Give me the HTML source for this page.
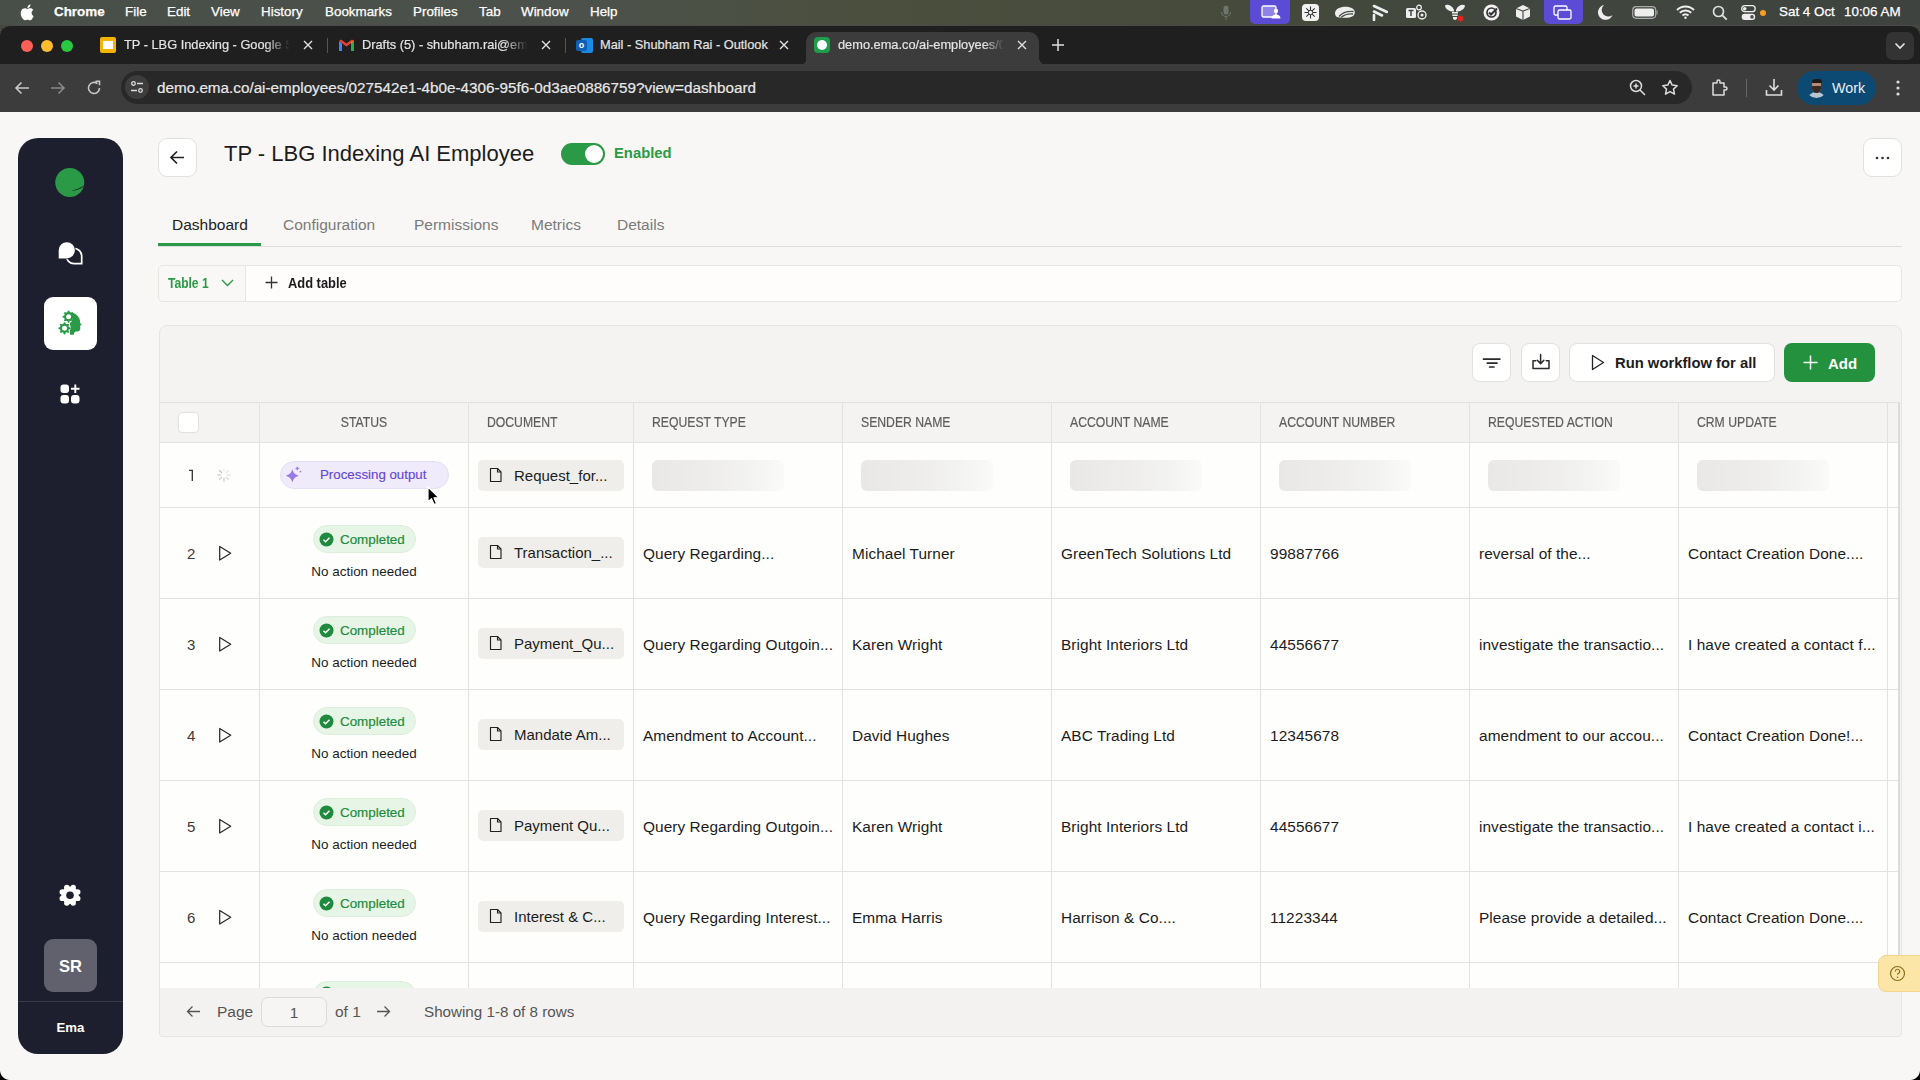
<!DOCTYPE html>
<html><head><meta charset="utf-8">
<style>
*{box-sizing:border-box;margin:0;padding:0}
html,body{width:1920px;height:1080px;overflow:hidden;background:#f8f7f5;font-family:"Liberation Sans",sans-serif;-webkit-font-smoothing:antialiased;}
.abs{position:absolute}
#menubar{position:absolute;left:0;top:0;width:1920px;height:25px;background:linear-gradient(90deg,#484e48 0%,#4c524b 30%,#4a4f3e 45%,#464b3b 62%,#41463e 78%,#3e433f 100%);color:#fff;font-size:13.4px;}
#menubar span{position:absolute;top:4px;white-space:nowrap;-webkit-text-stroke:0.25px #fff}
#tabbar{position:absolute;left:0;top:25px;width:1920px;height:40px;background:#1f1f1f;border-top:1px solid #4a4a4a;border-radius:10px 10px 0 0}
#toolbar{position:absolute;left:0;top:64px;width:1920px;height:48px;background:#3c3c3c}
.tab{position:absolute;top:0;height:40px;color:#e3e3e3;font-size:12.8px}
.tab .t{position:absolute;top:11px;white-space:nowrap;overflow:hidden;-webkit-text-stroke:0.2px #e3e3e3}
.tab .x{position:absolute;top:9px;font-size:16px;color:#e0e0e0}
#page{position:absolute;left:0;top:112px;width:1920px;height:968px;background:#f8f7f5}
#sidebar{position:absolute;left:18px;top:26px;width:105px;height:916px;background:#1e1f2e;border-radius:20px}
</style></head>
<body>
<div id="menubar">
  <svg class="abs" style="left:20px;top:4px" width="14" height="17" viewBox="0 0 14 17"><path fill="#fff" d="M11.6 9c0-2 1.6-3 1.7-3.1-1-1.4-2.4-1.6-2.9-1.6-1.2-.1-2.4.7-3 .7-.6 0-1.6-.7-2.6-.7C3.400 4.300 2.100 5.100 1.400 6.300c-1.400 2.400-.4 6 1 8 .7 1 1.500 2.100 2.500 2 1-.04 1.400-.6 2.600-.6s1.500.6 2.600.6c1.100 0 1.800-1 2.400-2 .8-1.100 1.100-2.200 1.100-2.300 0 0-2.100-.8-2.100-3.300zM9.700 3c.5-.7.9-1.600.8-2.500-.8 0-1.700.5-2.300 1.200-.5.600-.9 1.500-.8 2.400.9.100 1.700-.4 2.300-1.100z"/></svg>
  <span style="left:54px;font-weight:bold">Chrome</span>
  <span style="left:125px">File</span>
  <span style="left:167px">Edit</span>
  <span style="left:211px">View</span>
  <span style="left:261px">History</span>
  <span style="left:325px">Bookmarks</span>
  <span style="left:413px">Profiles</span>
  <span style="left:479px">Tab</span>
  <span style="left:521px">Window</span>
  <span style="left:590px">Help</span>
  <svg class="abs" style="left:1220px;top:5px" width="12" height="16" viewBox="0 0 12 16"><rect x="3.500" y="0.500" width="5" height="9" rx="2.500" fill="#6f746d"/><path d="M1.500 7a4.500 4.500 0 0 0 9 0M6 11.500v3" stroke="#6f746d" stroke-width="1.200" fill="none"/></svg>
  <div class="abs" style="left:1250px;top:0;width:40px;height:24px;background:#5b4bd5;border-radius:0 0 5px 5px"></div>
  <svg class="abs" style="left:1261px;top:5px" width="20" height="14" viewBox="0 0 20 14"><rect x="1" y="1" width="14" height="11" rx="1.500" fill="#8f84e6" stroke="#fff" stroke-width="1.300"/><circle cx="15" cy="6" r="2.200" fill="#fff"/><path d="M10.500 13.500c0-2.500 2-4 4.500-4s4.500 1.500 4.500 4z" fill="#fff"/></svg>
  <div class="abs" style="left:1302px;top:4px;width:17px;height:17px;background:#f2f2f2;border-radius:4px"></div>
  <svg class="abs" style="left:1303px;top:5px" width="15" height="15" viewBox="0 0 15 15"><g stroke="#333" stroke-width="1.100"><path d="M7.500 1.500v12M1.500 7.500h12M3.300 3.300l8.400 8.400M11.700 3.300l-8.400 8.400"/></g><circle cx="7.500" cy="7.500" r="2.200" fill="#f2f2f2" stroke="#333" stroke-width="1"/></svg>
  <svg class="abs" style="left:1334px;top:5px" width="22" height="15" viewBox="0 0 22 15"><path d="M3 12C0 10 .5 5.500 4 3.500 8 1 15 1 18.500 3.500c3 2 3 5.500.5 7.500-2.500 2-10 2.500-16 1z" fill="#eee"/><path d="M5 11.500C8 8 13 6 19.500 6.500M7 12.500c3-2.500 7-4 12-3.500" stroke="#4a4f48" stroke-width="1.300" fill="none"/></svg>
  <svg class="abs" style="left:1370px;top:4px" width="18" height="17" viewBox="0 0 18 17"><path d="M4 2l13 6M4 7.500l8 4M4 11l0 5" stroke="#eee" stroke-width="2.600" stroke-linecap="round"/></svg>
  <svg class="abs" style="left:1405px;top:4px" width="22" height="17" viewBox="0 0 22 17"><rect x="1" y="4" width="10" height="10" rx="1.500" fill="#eee"/><path d="M3.500 6.500h5M6 6.500v5.500" stroke="#444" stroke-width="1.500"/><circle cx="14" cy="3.500" r="2.300" stroke="#eee" stroke-width="1.300" fill="none"/><circle cx="17" cy="11" r="4" stroke="#eee" stroke-width="1.400" fill="none"/><circle cx="17" cy="11" r="1.500" fill="#eee"/></svg>
  <svg class="abs" style="left:1444px;top:3px" width="22" height="19" viewBox="0 0 22 19"><path d="M10 7C8 2 3 1 1 2.500c.5 4 4.500 6 9 6zM12 7c2-5 7-6 9-4.500-.5 4-4.500 6-9 6z" fill="#eee"/><path d="M8 9h6v1.500H8zM8.300 11.500h5.400V13H8.300zM8.800 14h4.400c0 2-1 3-2.200 3S8.800 16 8.800 14z" fill="#eee"/><circle cx="16.500" cy="15.500" r="3" fill="#e0241b"/></svg>
  <svg class="abs" style="left:1483px;top:4px" width="17" height="17" viewBox="0 0 17 17"><circle cx="8.500" cy="8.500" r="8" fill="#f2f2f2"/><circle cx="8.500" cy="8.500" r="4.500" stroke="#333" stroke-width="1.700" fill="none"/><path d="M6 8.500l2 2 6-6" stroke="#333" stroke-width="2" fill="none"/></svg>
  <svg class="abs" style="left:1515px;top:4px" width="16" height="17" viewBox="0 0 16 17"><path d="M8 1l7 3.500v8L8 16 1 12.500v-8z" fill="#eee"/><path d="M1 4.500L8 7l7-2.500M8 7v9" stroke="#4a4f48" stroke-width="1.200" fill="none"/></svg>
  <div class="abs" style="left:1544px;top:0;width:39px;height:24px;background:#5b4bd5;border-radius:0 0 5px 5px"></div>
  <svg class="abs" style="left:1553px;top:5px" width="20" height="15" viewBox="0 0 20 15"><rect x="1" y="1" width="13" height="9" rx="1.500" fill="none" stroke="#fff" stroke-width="1.300"/><rect x="5" y="5" width="13" height="9" rx="1.500" fill="#5b4bd5" stroke="#fff" stroke-width="1.300"/></svg>
  <svg class="abs" style="left:1598px;top:4px" width="15" height="16" viewBox="0 0 15 16"><path d="M6 1A7.500 7.500 0 1 0 14.500 11 6 6 0 0 1 6 1z" fill="#eee"/></svg>
  <svg class="abs" style="left:1632px;top:6px" width="27" height="13" viewBox="0 0 27 13"><rect x="0.700" y="0.700" width="23" height="11.600" rx="3.500" fill="none" stroke="#aaa" stroke-width="1.200"/><rect x="2.500" y="2.500" width="19.500" height="8" rx="2" fill="#eee"/><path d="M25 4.500v4" stroke="#999" stroke-width="1.300"/></svg>
  <svg class="abs" style="left:1676px;top:5px" width="19" height="14" viewBox="0 0 19 14"><path d="M1 5a12 12 0 0 1 17 0M3.800 7.800a8 8 0 0 1 11.400 0M6.500 10.500a4.200 4.200 0 0 1 6 0" stroke="#eee" stroke-width="2" fill="none"/><circle cx="9.500" cy="12.800" r="1.200" fill="#eee"/></svg>
  <svg class="abs" style="left:1712px;top:5px" width="16" height="16" viewBox="0 0 16 16"><circle cx="6.500" cy="6.500" r="5" stroke="#ddd" stroke-width="1.700" fill="none"/><path d="M10.200 10.200l4.500 4.500" stroke="#ddd" stroke-width="1.900"/></svg>
  <svg class="abs" style="left:1741px;top:5px" width="15" height="16" viewBox="0 0 15 16"><rect x="0.700" y="0.700" width="13.500" height="6" rx="3" fill="none" stroke="#eee" stroke-width="1.300"/><circle cx="3.700" cy="3.700" r="1.800" fill="#eee"/><rect x="0.700" y="8.800" width="13.500" height="6.200" rx="3" fill="#eee"/><circle cx="11" cy="11.900" r="1.800" fill="#4a4f48"/></svg>
  <div class="abs" style="left:1760px;top:10px;width:6px;height:6px;border-radius:3px;background:#f5a020"></div>
  <span style="left:1779px">Sat 4 Oct</span>
  <span style="left:1844px">10:06 AM</span>
</div>
<div class="abs" style="left:0;top:25px;width:1920px;height:12px;background:#44493f"></div>
<div id="tabbar">
  <div class="abs" style="left:21px;top:14px;width:12px;height:12px;border-radius:6px;background:#fe5f57"></div>
  <div class="abs" style="left:41px;top:14px;width:12px;height:12px;border-radius:6px;background:#febc2e"></div>
  <div class="abs" style="left:61px;top:14px;width:12px;height:12px;border-radius:6px;background:#28c840"></div>
  <!-- tab1 -->
  <div class="abs" style="left:100px;top:11px;width:16px;height:16px;border-radius:2px;background:#f4b400"><div class="abs" style="left:3px;top:4px;width:10px;height:8px;background:#fff"></div></div>
  <div class="tab" style="left:124px;width:180px"><span class="t" style="width:166px;-webkit-mask-image:linear-gradient(90deg,#000 85%,transparent)">TP - LBG Indexing - Google Sheets</span></div>
  <svg class="abs" style="left:303px;top:14px" width="10" height="10" viewBox="0 0 10 10"><path d="M1 1L9 9M9 1L1 9" stroke="#e0e0e0" stroke-width="1.4"/></svg>
  <div class="abs" style="left:327px;top:12px;width:1px;height:15px;background:#555"></div>
  <!-- tab2 -->
  <svg class="abs" style="left:339px;top:13px" width="15" height="12" viewBox="0 0 15 12"><path d="M0 2v10h3V4.5z" fill="#4285f4"/><path d="M12 4.5V12h3V2z" fill="#34a853"/><path d="M0 2l7.5 5.5L15 2 13 0.5 7.5 4.5 2 0.5z" fill="#ea4335"/><path d="M12 4.5l3-2.5V1.5 L12 3.5z" fill="#fbbc04"/></svg>
  <div class="tab" style="left:362px;width:180px"><span class="t" style="width:166px;-webkit-mask-image:linear-gradient(90deg,#000 85%,transparent)">Drafts (5) - shubham.rai@ema.co</span></div>
  <svg class="abs" style="left:541px;top:14px" width="10" height="10" viewBox="0 0 10 10"><path d="M1 1L9 9M9 1L1 9" stroke="#e0e0e0" stroke-width="1.4"/></svg>
  <div class="abs" style="left:565px;top:12px;width:1px;height:15px;background:#555"></div>
  <!-- tab3 -->
  <div class="abs" style="left:581px;top:12px;width:12px;height:15px;border-radius:2px;background:#1a8ae5"></div>
  <div class="abs" style="left:576px;top:14px;width:11px;height:11px;border-radius:2px;background:#0f5fb5;color:#fff;font-size:9px;font-weight:bold;text-align:center;line-height:11px">o</div>
  <div class="tab" style="left:600px;width:180px"><span class="t" style="width:170px">Mail - Shubham Rai - Outlook</span></div>
  <svg class="abs" style="left:779px;top:14px" width="10" height="10" viewBox="0 0 10 10"><path d="M1 1L9 9M9 1L1 9" stroke="#e0e0e0" stroke-width="1.4"/></svg>
  <!-- active tab -->
  <div class="abs" style="left:806px;top:6px;width:233px;height:34px;background:#3c3c3c;border-radius:10px 10px 0 0"></div>
  <div class="abs" style="left:797px;top:30px;width:10px;height:10px;background:radial-gradient(circle at 0 0,transparent 10px,#3c3c3c 10.5px)"></div>
  <div class="abs" style="left:1039px;top:30px;width:10px;height:10px;background:radial-gradient(circle at 100% 0,transparent 10px,#3c3c3c 10.5px)"></div>
  <div class="abs" style="left:814px;top:11px;width:16px;height:16px;border-radius:4px;background:#1e9e4a"><div class="abs" style="left:3px;top:3px;width:10px;height:10px;border-radius:5px;background:#fff"></div></div>
  <div class="tab" style="left:838px;width:180px"><span class="t" style="width:166px;-webkit-mask-image:linear-gradient(90deg,#000 88%,transparent)">demo.ema.co/ai-employees/027542e1</span></div>
  <svg class="abs" style="left:1017px;top:14px" width="10" height="10" viewBox="0 0 10 10"><path d="M1 1L9 9M9 1L1 9" stroke="#e0e0e0" stroke-width="1.4"/></svg>
  <svg class="abs" style="left:1052px;top:13px" width="12" height="12" viewBox="0 0 12 12"><path d="M6 0v12M0 6h12" stroke="#e0e0e0" stroke-width="1.5"/></svg>
  <div class="abs" style="left:1886px;top:6px;width:28px;height:28px;border-radius:7px;background:#333"></div>
  <svg class="abs" style="left:1894px;top:16px" width="12" height="8" viewBox="0 0 12 8"><path d="M1.5 1.5L6 6l4.5-4.5" stroke="#e8e8e8" stroke-width="1.6" fill="none"/></svg>
</div>
<div id="toolbar">
  <svg class="abs" style="left:14px;top:17px" width="16" height="14" viewBox="0 0 16 14"><path d="M15 7H2M7.5 1.5L2 7l5.5 5.5" stroke="#c8c8c8" stroke-width="1.6" fill="none"/></svg>
  <svg class="abs" style="left:50px;top:17px" width="16" height="14" viewBox="0 0 16 14"><path d="M1 7h13M8.5 1.5L14 7l-5.5 5.5" stroke="#8a8a8a" stroke-width="1.6" fill="none"/></svg>
  <svg class="abs" style="left:86px;top:16px" width="16" height="16" viewBox="0 0 16 16"><path d="M13.5 8A5.5 5.5 0 1 1 11.5 3.7" stroke="#c8c8c8" stroke-width="1.6" fill="none"/><path d="M9.5 1.2h4v4" stroke="#c8c8c8" stroke-width="1.6" fill="none"/></svg>
  <div class="abs" style="left:121px;top:7px;width:1571px;height:33px;border-radius:17px;background:#282828"></div>
  <div class="abs" style="left:125px;top:11px;width:24px;height:24px;border-radius:12px;background:#3d3d3d"></div>
  <svg class="abs" style="left:130px;top:16px" width="14" height="14" viewBox="0 0 14 14"><circle cx="3.5" cy="3.5" r="1.8" stroke="#ddd" stroke-width="1.3" fill="none"/><path d="M7 3.5h6M1 10.5h6" stroke="#ddd" stroke-width="1.3"/><circle cx="10.5" cy="10.5" r="1.8" stroke="#ddd" stroke-width="1.3" fill="none"/></svg>
  <span class="abs" style="left:157px;top:15px;color:#e8e8e8;font-size:15.25px;white-space:nowrap;-webkit-text-stroke:0.2px #e8e8e8">demo.ema.co/ai-employees/027542e1-4b0e-4306-95f6-0d3ae0886759?view=dashboard</span>
  <svg class="abs" style="left:1629px;top:15px" width="18" height="18" viewBox="0 0 18 18"><circle cx="7" cy="7" r="5.5" stroke="#ddd" stroke-width="1.5" fill="none"/><path d="M11 11l5 5M4.5 7h5M7 4.5v5" stroke="#ddd" stroke-width="1.5"/></svg>
  <svg class="abs" style="left:1661px;top:15px" width="18" height="18" viewBox="0 0 18 18"><path d="M9 1.5l2.2 4.6 5 .6-3.7 3.4 1 5-4.5-2.5-4.5 2.5 1-5L1.800 6.700l5-.6z" stroke="#ddd" stroke-width="1.5" fill="none" stroke-linejoin="round"/></svg>
  <svg class="abs" style="left:1711px;top:15px" width="18" height="18" viewBox="0 0 18 18"><path d="M2 4h4V2.500a1.500 1.500 0 0 1 3 0V4h4v4h1.500a1.500 1.500 0 0 1 0 3H13v5H2z" stroke="#ddd" stroke-width="1.5" fill="none" stroke-linejoin="round"/></svg>
  <div class="abs" style="left:1746px;top:15px;width:1px;height:18px;background:#666"></div>
  <svg class="abs" style="left:1765px;top:14px" width="18" height="19" viewBox="0 0 18 19"><path d="M9 1v11M4.5 7.5L9 12l4.5-4.5M1.5 12v5h15v-5" stroke="#ddd" stroke-width="1.6" fill="none"/></svg>
  <div class="abs" style="left:1797px;top:7px;width:79px;height:34px;border-radius:17px;background:#0c4a73"></div>
  <div class="abs" style="left:1806px;top:13px;width:21px;height:21px;border-radius:11px;background:#0c4a73;overflow:hidden"><div class="abs" style="left:2px;top:15px;width:17px;height:10px;border-radius:8px 8px 0 0;background:#b8c4d0"></div><div class="abs" style="left:6px;top:3px;width:9px;height:13px;border-radius:4.500px 4.500px 5px 5px;background:#b58a72"></div><div class="abs" style="left:6px;top:9px;width:9px;height:7px;border-radius:0 0 5px 5px;background:#3a2a24"></div><div class="abs" style="left:5.500px;top:1.500px;width:10px;height:4px;border-radius:5px 5px 1px 1px;background:#1e1a18"></div></div>
  <span class="abs" style="left:1832px;top:16px;color:#e8f0fe;font-size:14.3px;white-space:nowrap">Work</span>
  <svg class="abs" style="left:1895px;top:15px" width="6" height="18" viewBox="0 0 6 18"><circle cx="3" cy="3" r="1.6" fill="#ddd"/><circle cx="3" cy="9" r="1.6" fill="#ddd"/><circle cx="3" cy="15" r="1.6" fill="#ddd"/></svg>
</div>
<div id="page"></div>
<!-- SIDEBAR -->
<div class="abs" style="left:18px;top:138px;width:105px;height:916px;background:#1e1f2e;border-radius:20px"></div>
<svg class="abs" style="left:54px;top:167px" width="32" height="31" viewBox="0 0 32 31"><circle cx="15.75" cy="15.5" r="14.5" fill="#2a9a46"/><path d="M17 23.5c5-0.5 9-2.500 14-5.500-3 3.500-7 5.500-14 5.500z" fill="#1e1f2e"/></svg>
<svg class="abs" style="left:54px;top:236px" width="34" height="34" viewBox="0 0 34 34"><path d="M20 12.300A7.700 7.700 0 0 1 27.700 20V27.700H20A7.700 7.700 0 0 1 12.300 20" stroke="#fff" stroke-width="1.700" fill="none"/><path d="M4.700 14.300A8.100 8.100 0 1 1 12.800 22.400H4.700Z" fill="#fff" stroke="#1e1f2e" stroke-width="1.600" paint-order="stroke"/></svg>
<div class="abs" style="left:44px;top:297px;width:53px;height:53px;background:#fff;border-radius:9px"></div>
<svg class="abs" style="left:55px;top:308px" width="32" height="32" viewBox="0 0 32 32"><path d="M14.800 4.600C19.500 4.600 24.300 8 25 12.800L25.200 15.200L26.700 16.600L25.300 17.600L25.200 21.200C25 23 23.300 23.700 21.300 23.600L19.600 24.100L18.600 26.800L15 26.800L15 22.300C16 20.500 15.800 18.300 15 16.800L15 14.800C17.300 13.800 18.200 11.200 17.400 9C16.900 7.200 15.800 5.800 14.800 4.600Z" fill="#2a9a46"/><circle cx="13.6" cy="8.7" r="3.55" stroke="#2a9a46" stroke-width="2.10" fill="none"/><path d="M17.70 8.70L18.70 8.70" stroke="#2a9a46" stroke-width="2" stroke-linecap="round"/><path d="M16.50 11.60L17.21 12.31" stroke="#2a9a46" stroke-width="2" stroke-linecap="round"/><path d="M13.60 12.80L13.60 13.80" stroke="#2a9a46" stroke-width="2" stroke-linecap="round"/><path d="M10.70 11.60L9.99 12.31" stroke="#2a9a46" stroke-width="2" stroke-linecap="round"/><path d="M9.50 8.70L8.50 8.70" stroke="#2a9a46" stroke-width="2" stroke-linecap="round"/><path d="M10.70 5.80L9.99 5.09" stroke="#2a9a46" stroke-width="2" stroke-linecap="round"/><path d="M13.60 4.60L13.60 3.60" stroke="#2a9a46" stroke-width="2" stroke-linecap="round"/><path d="M16.50 5.80L17.21 5.09" stroke="#2a9a46" stroke-width="2" stroke-linecap="round"/><circle cx="9.5" cy="20.3" r="3.55" stroke="#2a9a46" stroke-width="2.10" fill="none"/><path d="M13.60 20.30L14.60 20.30" stroke="#2a9a46" stroke-width="2" stroke-linecap="round"/><path d="M12.40 23.20L13.11 23.91" stroke="#2a9a46" stroke-width="2" stroke-linecap="round"/><path d="M9.50 24.40L9.50 25.40" stroke="#2a9a46" stroke-width="2" stroke-linecap="round"/><path d="M6.60 23.20L5.89 23.91" stroke="#2a9a46" stroke-width="2" stroke-linecap="round"/><path d="M5.40 20.30L4.40 20.30" stroke="#2a9a46" stroke-width="2" stroke-linecap="round"/><path d="M6.60 17.40L5.89 16.69" stroke="#2a9a46" stroke-width="2" stroke-linecap="round"/><path d="M9.50 16.20L9.50 15.20" stroke="#2a9a46" stroke-width="2" stroke-linecap="round"/><path d="M12.40 17.40L13.11 16.69" stroke="#2a9a46" stroke-width="2" stroke-linecap="round"/></svg>
<svg class="abs" style="left:60px;top:384px" width="21" height="20" viewBox="0 0 21 20"><rect x="0.500" y="0.500" width="8.500" height="8.500" rx="3" fill="#fff"/><rect x="0.500" y="11" width="8.500" height="8.500" rx="3" fill="#fff"/><rect x="11" y="11" width="8.500" height="8.500" rx="3" fill="#fff"/><path d="M15.300 0.500v8.500M11 4.700h8.500" stroke="#fff" stroke-width="1.900"/></svg>
<svg class="abs" style="left:58px;top:883px" width="24" height="24" viewBox="0 0 24 24"><circle cx="12" cy="12.200" r="8.700" fill="#fff"/><circle cx="19.76" cy="15.41" r="2.700" fill="#fff"/><circle cx="15.21" cy="19.96" r="2.700" fill="#fff"/><circle cx="8.79" cy="19.96" r="2.700" fill="#fff"/><circle cx="4.24" cy="15.41" r="2.700" fill="#fff"/><circle cx="4.24" cy="8.99" r="2.700" fill="#fff"/><circle cx="8.79" cy="4.44" r="2.700" fill="#fff"/><circle cx="15.21" cy="4.44" r="2.700" fill="#fff"/><circle cx="19.76" cy="8.99" r="2.700" fill="#fff"/><circle cx="12" cy="12.200" r="3.800" fill="#1e1f2e"/></svg>
<div class="abs" style="left:44px;top:939px;width:53px;height:53px;background:#60616d;border-radius:9px;color:#fff;font-weight:bold;font-size:16.5px;text-align:center;line-height:54px">SR</div>
<div class="abs" style="left:18px;top:1001px;width:105px;height:1px;background:#3a3b48"></div>
<div class="abs" style="left:18px;top:1020px;width:105px;text-align:center;color:#fff;font-weight:bold;font-size:13.2px">Ema</div>

<!-- HEADER -->
<div class="abs" style="left:158px;top:138px;width:39px;height:39px;background:#fff;border:1px solid #e2e1df;border-radius:9px"></div>
<svg class="abs" style="left:169px;top:149px" width="17" height="17" viewBox="0 0 17 17"><path d="M15 8.500H2M8 2.500L2 8.500l6 6" stroke="#222" stroke-width="1.700" fill="none"/></svg>
<div class="abs" style="left:224px;top:141px;font-size:22px;color:#1c1c1c;white-space:nowrap">TP - LBG Indexing AI Employee</div>
<div class="abs" style="left:561px;top:143px;width:44px;height:22px;background:#2a9a46;border-radius:11px"><div class="abs" style="left:24px;top:2px;width:18px;height:18px;border-radius:9px;background:#fff"></div></div>
<div class="abs" style="left:614px;top:145px;font-size:14.8px;color:#2a9a46;font-weight:bold;white-space:nowrap">Enabled</div>
<div class="abs" style="left:1863px;top:138px;width:39px;height:39px;background:#fff;border:1px solid #e2e1df;border-radius:9px"></div>
<svg class="abs" style="left:1875px;top:156px" width="15" height="4" viewBox="0 0 15 4"><circle cx="2" cy="2" r="1.300" fill="#333"/><circle cx="7.500" cy="2" r="1.300" fill="#333"/><circle cx="13" cy="2" r="1.300" fill="#333"/></svg>

<!-- TABS -->
<div class="abs" style="left:158px;top:246px;width:1744px;height:1px;background:#dddcda"></div>
<div class="abs" style="left:158px;top:243px;width:103px;height:3px;background:#2a9a46"></div>
<div class="abs" style="left:172px;top:216px;font-size:15.5px;color:#222;white-space:nowrap">Dashboard</div>
<div class="abs" style="left:283px;top:216px;font-size:15.5px;color:#7b7b7b;white-space:nowrap">Configuration</div>
<div class="abs" style="left:414px;top:216px;font-size:15.5px;color:#7b7b7b;white-space:nowrap">Permissions</div>
<div class="abs" style="left:531px;top:216px;font-size:15.5px;color:#7b7b7b;white-space:nowrap">Metrics</div>
<div class="abs" style="left:617px;top:216px;font-size:15.5px;color:#7b7b7b;white-space:nowrap">Details</div>

<!-- TABLE SELECTOR -->
<div class="abs" style="left:158px;top:265px;width:1744px;height:37px;background:#fefdfb;border:1px solid #e6e5e2;border-radius:5px"></div>
<div class="abs" style="left:159px;top:266px;width:87px;height:35px;background:#f9f8f6;border-right:1px solid #e6e5e2;border-radius:5px 0 0 5px"></div>
<div class="abs" style="left:168px;top:275px;font-size:14px;color:#2a9a46;font-weight:bold;white-space:nowrap;transform:scaleX(0.86);transform-origin:0 0">Table 1</div>
<svg class="abs" style="left:221px;top:279px" width="13" height="8" viewBox="0 0 13 8"><path d="M1 1l5.500 5.500L12 1" stroke="#2a9a46" stroke-width="1.400" fill="none"/></svg>
<svg class="abs" style="left:265px;top:276px" width="13" height="13" viewBox="0 0 13 13"><path d="M6.500 0.500v12M0.500 6.500h12" stroke="#333" stroke-width="1.300"/></svg>
<div class="abs" style="left:288px;top:275px;font-size:14px;color:#1c1c1c;font-weight:bold;white-space:nowrap;transform:scaleX(0.92);transform-origin:0 0">Add table</div>

<!-- TABLE CONTAINER -->
<div class="abs" style="left:159px;top:325px;width:1743px;height:712px;background:#f4f3f1;border:1px solid #e6e5e2;border-radius:8px 8px 4px 4px"></div>
<!-- toolbar buttons -->
<div class="abs" style="left:1472px;top:343px;width:39px;height:39px;background:#fff;border:1px solid #e2e1df;border-radius:8px"></div>
<svg class="abs" style="left:1480px;top:354px" width="24" height="16" viewBox="0 0 24 16"><path d="M3.500 5.100h16.400M7.300 9.100h9.700M9.600 13h4.400" stroke="#2a2a2a" stroke-width="1.700" stroke-linecap="round"/></svg>
<div class="abs" style="left:1521px;top:343px;width:39px;height:39px;background:#fff;border:1px solid #e2e1df;border-radius:8px"></div>
<svg class="abs" style="left:1530px;top:352px" width="22" height="20" viewBox="0 0 22 20"><path d="M10.600 2.500v9M7.300 8.300l3.300 3.300 3.300-3.300" stroke="#2a2a2a" stroke-width="1.500" fill="none" stroke-linecap="round" stroke-linejoin="round"/><path d="M5.800 8.800H3v7.700h16V8.800h-2.800" stroke="#2a2a2a" stroke-width="1.500" fill="none" stroke-linecap="round" stroke-linejoin="round"/></svg>
<div class="abs" style="left:1569px;top:343px;width:206px;height:39px;background:#fff;border:1px solid #e2e1df;border-radius:8px"></div>
<svg class="abs" style="left:1591px;top:354px" width="14" height="17" viewBox="0 0 14 17"><path d="M1.500 1.500v14l11-7z" stroke="#222" stroke-width="1.300" fill="none" stroke-linejoin="round"/></svg>
<div class="abs" style="left:1615px;top:355px;font-size:14.8px;color:#1c1c1c;font-weight:bold;white-space:nowrap">Run workflow for all</div>
<div class="abs" style="left:1784px;top:343px;width:91px;height:39px;background:#24913f;border-radius:8px"></div>
<svg class="abs" style="left:1803px;top:355px" width="15" height="15" viewBox="0 0 15 15"><path d="M7.500 0.500v14M0.500 7.500h14" stroke="#fff" stroke-width="1.500"/></svg>
<div class="abs" style="left:1828px;top:355px;font-size:15px;color:#fff;font-weight:bold;white-space:nowrap">Add</div>

<div id="table">
<div class="abs" style="left:160px;top:442px;width:1740px;height:546px;background:#fefefd"></div>
<div class="abs" style="left:160px;top:402px;width:1740px;height:40px;background:#f4f3f1"></div>
<div class="abs" style="left:160px;top:402px;width:1740px;height:1px;background:#e3e2e0"></div>
<div class="abs" style="left:160px;top:442px;width:1740px;height:1px;background:#e3e2e0"></div>
<div class="abs" style="left:160px;top:507px;width:1740px;height:1px;background:#e3e2e0"></div>
<div class="abs" style="left:160px;top:598px;width:1740px;height:1px;background:#e3e2e0"></div>
<div class="abs" style="left:160px;top:689px;width:1740px;height:1px;background:#e3e2e0"></div>
<div class="abs" style="left:160px;top:780px;width:1740px;height:1px;background:#e3e2e0"></div>
<div class="abs" style="left:160px;top:871px;width:1740px;height:1px;background:#e3e2e0"></div>
<div class="abs" style="left:160px;top:962px;width:1740px;height:1px;background:#e3e2e0"></div>
<div class="abs" style="left:259px;top:402px;width:1px;height:586px;background:#e3e2e0"></div>
<div class="abs" style="left:468px;top:402px;width:1px;height:586px;background:#e3e2e0"></div>
<div class="abs" style="left:633px;top:402px;width:1px;height:586px;background:#e3e2e0"></div>
<div class="abs" style="left:842px;top:402px;width:1px;height:586px;background:#e3e2e0"></div>
<div class="abs" style="left:1051px;top:402px;width:1px;height:586px;background:#e3e2e0"></div>
<div class="abs" style="left:1260px;top:402px;width:1px;height:586px;background:#e3e2e0"></div>
<div class="abs" style="left:1469px;top:402px;width:1px;height:586px;background:#e3e2e0"></div>
<div class="abs" style="left:1678px;top:402px;width:1px;height:586px;background:#e3e2e0"></div>
<div class="abs" style="left:1887px;top:402px;width:1px;height:586px;background:#e3e2e0"></div>
<div class="abs" style="left:1898px;top:402px;width:2px;height:586px;background:#dcdbd9"></div>
<div class="abs" style="left:178px;top:412px;width:21px;height:21px;background:#fff;border:1px solid #e2e1df;border-radius:4px"></div>
<div class="abs" style="left:260px;top:414px;width:208px;text-align:center;font-size:14.2px;color:#5e5e5e;transform:scaleX(0.86);-webkit-text-stroke:0.2px #5e5e5e">STATUS</div>
<div class="abs" style="left:487px;top:414px;font-size:14.2px;color:#5e5e5e;white-space:nowrap;transform:scaleX(0.86);transform-origin:0 0;-webkit-text-stroke:0.2px #5e5e5e">DOCUMENT</div>
<div class="abs" style="left:652px;top:414px;font-size:14.2px;color:#5e5e5e;white-space:nowrap;transform:scaleX(0.86);transform-origin:0 0;-webkit-text-stroke:0.2px #5e5e5e">REQUEST TYPE</div>
<div class="abs" style="left:861px;top:414px;font-size:14.2px;color:#5e5e5e;white-space:nowrap;transform:scaleX(0.86);transform-origin:0 0;-webkit-text-stroke:0.2px #5e5e5e">SENDER NAME</div>
<div class="abs" style="left:1070px;top:414px;font-size:14.2px;color:#5e5e5e;white-space:nowrap;transform:scaleX(0.86);transform-origin:0 0;-webkit-text-stroke:0.2px #5e5e5e">ACCOUNT NAME</div>
<div class="abs" style="left:1279px;top:414px;font-size:14.2px;color:#5e5e5e;white-space:nowrap;transform:scaleX(0.86);transform-origin:0 0;-webkit-text-stroke:0.2px #5e5e5e">ACCOUNT NUMBER</div>
<div class="abs" style="left:1488px;top:414px;font-size:14.2px;color:#5e5e5e;white-space:nowrap;transform:scaleX(0.86);transform-origin:0 0;-webkit-text-stroke:0.2px #5e5e5e">REQUESTED ACTION</div>
<div class="abs" style="left:1697px;top:414px;font-size:14.2px;color:#5e5e5e;white-space:nowrap;transform:scaleX(0.86);transform-origin:0 0;-webkit-text-stroke:0.2px #5e5e5e">CRM UPDATE</div>
<svg class="abs" style="left:186px;top:469px" width="10" height="13" viewBox="0 0 10 13"><path d="M3 1.300h3.300V12" stroke="#333" stroke-width="1.300" fill="none"/></svg>
<svg class="abs" style="left:216px;top:467px" width="16" height="16" viewBox="0 0 16 16"><path d="M8.00 4.70L8.00 1.70" stroke="#999" stroke-opacity="0.20" stroke-width="1.100" stroke-linecap="round"/><path d="M10.33 5.67L12.45 3.55" stroke="#999" stroke-opacity="0.27" stroke-width="1.100" stroke-linecap="round"/><path d="M11.30 8.00L14.30 8.00" stroke="#999" stroke-opacity="0.34" stroke-width="1.100" stroke-linecap="round"/><path d="M10.33 10.33L12.45 12.45" stroke="#999" stroke-opacity="0.41" stroke-width="1.100" stroke-linecap="round"/><path d="M8.00 11.30L8.00 14.30" stroke="#999" stroke-opacity="0.47" stroke-width="1.100" stroke-linecap="round"/><path d="M5.67 10.33L3.55 12.45" stroke="#999" stroke-opacity="0.54" stroke-width="1.100" stroke-linecap="round"/><path d="M4.70 8.00L1.70 8.00" stroke="#999" stroke-opacity="0.61" stroke-width="1.100" stroke-linecap="round"/><path d="M5.67 5.67L3.55 3.55" stroke="#999" stroke-opacity="0.68" stroke-width="1.100" stroke-linecap="round"/></svg>
<div class="abs" style="left:280px;top:461px;width:169px;height:28px;background:#efebfb;border:1px solid #e6e0f7;border-radius:14px"></div>
<svg class="abs" style="left:285px;top:466px" width="18" height="18" viewBox="0 0 18 18"><path d="M7.300 3.300Q8.600 8.500 13.800 9.800Q8.600 11.100 7.300 16.300Q6 11.100 .8 9.800Q6 8.500 7.300 3.300Z" fill="#9b7be3"/><path d="M12.300 .3Q12.850 1.950 14.500 2.500Q12.850 3.050 12.300 4.700Q11.750 3.050 10.100 2.500Q11.750 1.950 12.300 .3Z" fill="#9b7be3"/><circle cx="15.400" cy="5.600" r=".9" fill="#9b7be3"/></svg>
<div class="abs" style="left:320px;top:467px;font-size:13.3px;color:#6547d4;white-space:nowrap;-webkit-text-stroke:0.15px #6547d4">Processing output</div>
<div class="abs" style="left:478px;top:460px;width:146px;height:31px;background:#efeeeb;border-radius:5px"></div>
<svg class="abs" style="left:489px;top:467px" width="14" height="16" viewBox="0 0 14 16"><path d="M1.500 1.500h7l3.500 3.500v9.500h-10.500z" stroke="#222" stroke-width="1.150" fill="none" stroke-linejoin="round"/><path d="M8.500 1.500v3.500h3.500" stroke="#222" stroke-width="1.100" fill="none"/></svg>
<div class="abs" style="left:514px;top:467px;font-size:15px;color:#1c1c1c;white-space:nowrap">Request_for...</div>
<div class="abs" style="left:652px;top:460px;width:132px;height:31px;border-radius:6px;background:linear-gradient(90deg,#e9e8e6 0%,#eeedeb 45%,#f3f3f2 75%,#fafaf9 100%)"></div>
<div class="abs" style="left:861px;top:460px;width:132px;height:31px;border-radius:6px;background:linear-gradient(90deg,#e9e8e6 0%,#eeedeb 45%,#f3f3f2 75%,#fafaf9 100%)"></div>
<div class="abs" style="left:1070px;top:460px;width:132px;height:31px;border-radius:6px;background:linear-gradient(90deg,#e9e8e6 0%,#eeedeb 45%,#f3f3f2 75%,#fafaf9 100%)"></div>
<div class="abs" style="left:1279px;top:460px;width:132px;height:31px;border-radius:6px;background:linear-gradient(90deg,#e9e8e6 0%,#eeedeb 45%,#f3f3f2 75%,#fafaf9 100%)"></div>
<div class="abs" style="left:1488px;top:460px;width:132px;height:31px;border-radius:6px;background:linear-gradient(90deg,#e9e8e6 0%,#eeedeb 45%,#f3f3f2 75%,#fafaf9 100%)"></div>
<div class="abs" style="left:1697px;top:460px;width:132px;height:31px;border-radius:6px;background:linear-gradient(90deg,#e9e8e6 0%,#eeedeb 45%,#f3f3f2 75%,#fafaf9 100%)"></div>
<div class="abs" style="left:187px;top:545px;font-size:15px;color:#3a3a3a">2</div>
<svg class="abs" style="left:218px;top:545px" width="15" height="17" viewBox="0 0 15 17"><path d="M1.700 1.500v13.500l11-6.750z" stroke="#2a2a2a" stroke-width="1.250" fill="none" stroke-linejoin="round"/></svg>
<div class="abs" style="left:313px;top:525px;width:103px;height:28px;background:#e6f5e6;border:1px solid #dbefdc;border-radius:14px"></div>
<svg class="abs" style="left:319px;top:532px" width="15" height="15" viewBox="0 0 15 15"><circle cx="7.500" cy="7.500" r="7" fill="#1f8a3e"/><path d="M4.500 7.700l2 2 4-4" stroke="#fff" stroke-width="1.500" fill="none"/></svg>
<div class="abs" style="left:340px;top:532px;font-size:13.4px;color:#1f8c3d;white-space:nowrap;-webkit-text-stroke:0.2px #1f8c3d">Completed</div>
<div class="abs" style="left:260px;top:564px;width:208px;text-align:center;font-size:13.45px;color:#1c1c1c;white-space:nowrap">No action needed</div>
<div class="abs" style="left:478px;top:537px;width:146px;height:31px;background:#efeeeb;border-radius:5px"></div>
<svg class="abs" style="left:489px;top:544px" width="14" height="16" viewBox="0 0 14 16"><path d="M1.500 1.500h7l3.500 3.500v9.500h-10.500z" stroke="#222" stroke-width="1.150" fill="none" stroke-linejoin="round"/><path d="M8.500 1.500v3.500h3.500" stroke="#222" stroke-width="1.100" fill="none"/></svg>
<div class="abs" style="left:514px;top:544px;font-size:15px;color:#1c1c1c;white-space:nowrap">Transaction_...</div>
<div class="abs" style="left:643px;top:545px;font-size:15.4px;color:#1c1c1c;white-space:nowrap;letter-spacing:0.07px">Query Regarding...</div>
<div class="abs" style="left:852px;top:545px;font-size:15.4px;color:#1c1c1c;white-space:nowrap;letter-spacing:0.07px">Michael Turner</div>
<div class="abs" style="left:1061px;top:545px;font-size:15.4px;color:#1c1c1c;white-space:nowrap;letter-spacing:0.07px">GreenTech Solutions Ltd</div>
<div class="abs" style="left:1270px;top:545px;font-size:15.4px;color:#1c1c1c;white-space:nowrap;letter-spacing:0.07px">99887766</div>
<div class="abs" style="left:1479px;top:545px;font-size:15.4px;color:#1c1c1c;white-space:nowrap;letter-spacing:0.07px">reversal of the...</div>
<div class="abs" style="left:1688px;top:545px;font-size:15.4px;color:#1c1c1c;white-space:nowrap;letter-spacing:0.07px">Contact Creation Done....</div>
<div class="abs" style="left:187px;top:636px;font-size:15px;color:#3a3a3a">3</div>
<svg class="abs" style="left:218px;top:636px" width="15" height="17" viewBox="0 0 15 17"><path d="M1.700 1.500v13.500l11-6.750z" stroke="#2a2a2a" stroke-width="1.250" fill="none" stroke-linejoin="round"/></svg>
<div class="abs" style="left:313px;top:616px;width:103px;height:28px;background:#e6f5e6;border:1px solid #dbefdc;border-radius:14px"></div>
<svg class="abs" style="left:319px;top:623px" width="15" height="15" viewBox="0 0 15 15"><circle cx="7.500" cy="7.500" r="7" fill="#1f8a3e"/><path d="M4.500 7.700l2 2 4-4" stroke="#fff" stroke-width="1.500" fill="none"/></svg>
<div class="abs" style="left:340px;top:623px;font-size:13.4px;color:#1f8c3d;white-space:nowrap;-webkit-text-stroke:0.2px #1f8c3d">Completed</div>
<div class="abs" style="left:260px;top:655px;width:208px;text-align:center;font-size:13.45px;color:#1c1c1c;white-space:nowrap">No action needed</div>
<div class="abs" style="left:478px;top:628px;width:146px;height:31px;background:#efeeeb;border-radius:5px"></div>
<svg class="abs" style="left:489px;top:635px" width="14" height="16" viewBox="0 0 14 16"><path d="M1.500 1.500h7l3.500 3.500v9.500h-10.500z" stroke="#222" stroke-width="1.150" fill="none" stroke-linejoin="round"/><path d="M8.500 1.500v3.500h3.500" stroke="#222" stroke-width="1.100" fill="none"/></svg>
<div class="abs" style="left:514px;top:635px;font-size:15px;color:#1c1c1c;white-space:nowrap">Payment_Qu...</div>
<div class="abs" style="left:643px;top:636px;font-size:15.4px;color:#1c1c1c;white-space:nowrap;letter-spacing:0.07px">Query Regarding Outgoin...</div>
<div class="abs" style="left:852px;top:636px;font-size:15.4px;color:#1c1c1c;white-space:nowrap;letter-spacing:0.07px">Karen Wright</div>
<div class="abs" style="left:1061px;top:636px;font-size:15.4px;color:#1c1c1c;white-space:nowrap;letter-spacing:0.07px">Bright Interiors Ltd</div>
<div class="abs" style="left:1270px;top:636px;font-size:15.4px;color:#1c1c1c;white-space:nowrap;letter-spacing:0.07px">44556677</div>
<div class="abs" style="left:1479px;top:636px;font-size:15.4px;color:#1c1c1c;white-space:nowrap;letter-spacing:0.07px">investigate the transactio...</div>
<div class="abs" style="left:1688px;top:636px;font-size:15.4px;color:#1c1c1c;white-space:nowrap;letter-spacing:0.07px">I have created a contact f...</div>
<div class="abs" style="left:187px;top:727px;font-size:15px;color:#3a3a3a">4</div>
<svg class="abs" style="left:218px;top:727px" width="15" height="17" viewBox="0 0 15 17"><path d="M1.700 1.500v13.500l11-6.750z" stroke="#2a2a2a" stroke-width="1.250" fill="none" stroke-linejoin="round"/></svg>
<div class="abs" style="left:313px;top:707px;width:103px;height:28px;background:#e6f5e6;border:1px solid #dbefdc;border-radius:14px"></div>
<svg class="abs" style="left:319px;top:714px" width="15" height="15" viewBox="0 0 15 15"><circle cx="7.500" cy="7.500" r="7" fill="#1f8a3e"/><path d="M4.500 7.700l2 2 4-4" stroke="#fff" stroke-width="1.500" fill="none"/></svg>
<div class="abs" style="left:340px;top:714px;font-size:13.4px;color:#1f8c3d;white-space:nowrap;-webkit-text-stroke:0.2px #1f8c3d">Completed</div>
<div class="abs" style="left:260px;top:746px;width:208px;text-align:center;font-size:13.45px;color:#1c1c1c;white-space:nowrap">No action needed</div>
<div class="abs" style="left:478px;top:719px;width:146px;height:31px;background:#efeeeb;border-radius:5px"></div>
<svg class="abs" style="left:489px;top:726px" width="14" height="16" viewBox="0 0 14 16"><path d="M1.500 1.500h7l3.500 3.500v9.500h-10.500z" stroke="#222" stroke-width="1.150" fill="none" stroke-linejoin="round"/><path d="M8.500 1.500v3.500h3.500" stroke="#222" stroke-width="1.100" fill="none"/></svg>
<div class="abs" style="left:514px;top:726px;font-size:15px;color:#1c1c1c;white-space:nowrap">Mandate Am...</div>
<div class="abs" style="left:643px;top:727px;font-size:15.4px;color:#1c1c1c;white-space:nowrap;letter-spacing:0.07px">Amendment to Account...</div>
<div class="abs" style="left:852px;top:727px;font-size:15.4px;color:#1c1c1c;white-space:nowrap;letter-spacing:0.07px">David Hughes</div>
<div class="abs" style="left:1061px;top:727px;font-size:15.4px;color:#1c1c1c;white-space:nowrap;letter-spacing:0.07px">ABC Trading Ltd</div>
<div class="abs" style="left:1270px;top:727px;font-size:15.4px;color:#1c1c1c;white-space:nowrap;letter-spacing:0.07px">12345678</div>
<div class="abs" style="left:1479px;top:727px;font-size:15.4px;color:#1c1c1c;white-space:nowrap;letter-spacing:0.07px">amendment to our accou...</div>
<div class="abs" style="left:1688px;top:727px;font-size:15.4px;color:#1c1c1c;white-space:nowrap;letter-spacing:0.07px">Contact Creation Done!...</div>
<div class="abs" style="left:187px;top:818px;font-size:15px;color:#3a3a3a">5</div>
<svg class="abs" style="left:218px;top:818px" width="15" height="17" viewBox="0 0 15 17"><path d="M1.700 1.500v13.500l11-6.750z" stroke="#2a2a2a" stroke-width="1.250" fill="none" stroke-linejoin="round"/></svg>
<div class="abs" style="left:313px;top:798px;width:103px;height:28px;background:#e6f5e6;border:1px solid #dbefdc;border-radius:14px"></div>
<svg class="abs" style="left:319px;top:805px" width="15" height="15" viewBox="0 0 15 15"><circle cx="7.500" cy="7.500" r="7" fill="#1f8a3e"/><path d="M4.500 7.700l2 2 4-4" stroke="#fff" stroke-width="1.500" fill="none"/></svg>
<div class="abs" style="left:340px;top:805px;font-size:13.4px;color:#1f8c3d;white-space:nowrap;-webkit-text-stroke:0.2px #1f8c3d">Completed</div>
<div class="abs" style="left:260px;top:837px;width:208px;text-align:center;font-size:13.45px;color:#1c1c1c;white-space:nowrap">No action needed</div>
<div class="abs" style="left:478px;top:810px;width:146px;height:31px;background:#efeeeb;border-radius:5px"></div>
<svg class="abs" style="left:489px;top:817px" width="14" height="16" viewBox="0 0 14 16"><path d="M1.500 1.500h7l3.500 3.500v9.500h-10.500z" stroke="#222" stroke-width="1.150" fill="none" stroke-linejoin="round"/><path d="M8.500 1.500v3.500h3.500" stroke="#222" stroke-width="1.100" fill="none"/></svg>
<div class="abs" style="left:514px;top:817px;font-size:15px;color:#1c1c1c;white-space:nowrap">Payment Qu...</div>
<div class="abs" style="left:643px;top:818px;font-size:15.4px;color:#1c1c1c;white-space:nowrap;letter-spacing:0.07px">Query Regarding Outgoin...</div>
<div class="abs" style="left:852px;top:818px;font-size:15.4px;color:#1c1c1c;white-space:nowrap;letter-spacing:0.07px">Karen Wright</div>
<div class="abs" style="left:1061px;top:818px;font-size:15.4px;color:#1c1c1c;white-space:nowrap;letter-spacing:0.07px">Bright Interiors Ltd</div>
<div class="abs" style="left:1270px;top:818px;font-size:15.4px;color:#1c1c1c;white-space:nowrap;letter-spacing:0.07px">44556677</div>
<div class="abs" style="left:1479px;top:818px;font-size:15.4px;color:#1c1c1c;white-space:nowrap;letter-spacing:0.07px">investigate the transactio...</div>
<div class="abs" style="left:1688px;top:818px;font-size:15.4px;color:#1c1c1c;white-space:nowrap;letter-spacing:0.07px">I have created a contact i...</div>
<div class="abs" style="left:187px;top:909px;font-size:15px;color:#3a3a3a">6</div>
<svg class="abs" style="left:218px;top:909px" width="15" height="17" viewBox="0 0 15 17"><path d="M1.700 1.500v13.500l11-6.750z" stroke="#2a2a2a" stroke-width="1.250" fill="none" stroke-linejoin="round"/></svg>
<div class="abs" style="left:313px;top:889px;width:103px;height:28px;background:#e6f5e6;border:1px solid #dbefdc;border-radius:14px"></div>
<svg class="abs" style="left:319px;top:896px" width="15" height="15" viewBox="0 0 15 15"><circle cx="7.500" cy="7.500" r="7" fill="#1f8a3e"/><path d="M4.500 7.700l2 2 4-4" stroke="#fff" stroke-width="1.500" fill="none"/></svg>
<div class="abs" style="left:340px;top:896px;font-size:13.4px;color:#1f8c3d;white-space:nowrap;-webkit-text-stroke:0.2px #1f8c3d">Completed</div>
<div class="abs" style="left:260px;top:928px;width:208px;text-align:center;font-size:13.45px;color:#1c1c1c;white-space:nowrap">No action needed</div>
<div class="abs" style="left:478px;top:901px;width:146px;height:31px;background:#efeeeb;border-radius:5px"></div>
<svg class="abs" style="left:489px;top:908px" width="14" height="16" viewBox="0 0 14 16"><path d="M1.500 1.500h7l3.500 3.500v9.500h-10.500z" stroke="#222" stroke-width="1.150" fill="none" stroke-linejoin="round"/><path d="M8.500 1.500v3.500h3.500" stroke="#222" stroke-width="1.100" fill="none"/></svg>
<div class="abs" style="left:514px;top:908px;font-size:15px;color:#1c1c1c;white-space:nowrap">Interest &amp; C...</div>
<div class="abs" style="left:643px;top:909px;font-size:15.4px;color:#1c1c1c;white-space:nowrap;letter-spacing:0.07px">Query Regarding Interest...</div>
<div class="abs" style="left:852px;top:909px;font-size:15.4px;color:#1c1c1c;white-space:nowrap;letter-spacing:0.07px">Emma Harris</div>
<div class="abs" style="left:1061px;top:909px;font-size:15.4px;color:#1c1c1c;white-space:nowrap;letter-spacing:0.07px">Harrison &amp; Co....</div>
<div class="abs" style="left:1270px;top:909px;font-size:15.4px;color:#1c1c1c;white-space:nowrap;letter-spacing:0.07px">11223344</div>
<div class="abs" style="left:1479px;top:909px;font-size:15.4px;color:#1c1c1c;white-space:nowrap;letter-spacing:0.07px">Please provide a detailed...</div>
<div class="abs" style="left:1688px;top:909px;font-size:15.4px;color:#1c1c1c;white-space:nowrap;letter-spacing:0.07px">Contact Creation Done....</div>
<div class="abs" style="left:313px;top:981px;width:103px;height:28px;background:#e6f5e6;border:1px solid #dbefdc;border-radius:14px"></div>
<svg class="abs" style="left:319px;top:986px" width="15" height="15" viewBox="0 0 15 15"><circle cx="7.500" cy="7.500" r="7" fill="#1f8a3e"/></svg>
<div class="abs" style="left:160px;top:988px;width:1740px;height:48px;background:#f3f2f0;border-radius:0 0 3px 3px"></div>
<svg class="abs" style="left:186px;top:1005px" width="15" height="13" viewBox="0 0 15 13"><path d="M14 6.500H1.500M6.500 1.500l-5 5 5 5" stroke="#555" stroke-width="1.300" fill="none"/></svg>
<div class="abs" style="left:217px;top:1003px;font-size:15.5px;color:#555">Page</div>
<div class="abs" style="left:261px;top:997px;width:66px;height:30px;border:1px solid #dcdbd9;border-radius:7px;background:#f6f5f3;text-align:center;font-size:15.5px;color:#555;line-height:29px">1</div>
<div class="abs" style="left:335px;top:1003px;font-size:15.5px;color:#555">of 1</div>
<svg class="abs" style="left:376px;top:1005px" width="15" height="13" viewBox="0 0 15 13"><path d="M1 6.500h12.500M8.500 1.500l5 5-5 5" stroke="#555" stroke-width="1.300" fill="none"/></svg>
<div class="abs" style="left:424px;top:1003px;font-size:15.2px;color:#555;white-space:nowrap">Showing 1-8 of 8 rows</div>
<div class="abs" style="left:1878px;top:955px;width:50px;height:37px;background:#fbe6a8;border:1px solid #f1d58c;border-radius:8px"></div>
<svg class="abs" style="left:1889px;top:965px" width="17" height="17" viewBox="0 0 17 17"><circle cx="8.500" cy="8.500" r="7" stroke="#8a6d1d" stroke-width="1.200" fill="none"/><path d="M6.300 6.500a2.200 2.200 0 1 1 3 2c-.6.300-.8.700-.8 1.300" stroke="#8a6d1d" stroke-width="1.200" fill="none"/><circle cx="8.500" cy="12.300" r=".8" fill="#8a6d1d"/></svg>
<svg class="abs" style="left:427px;top:486px" width="14" height="20" viewBox="0 0 14 20"><path d="M1 1v15l3.500-3.300 2.500 5.800 2.500-1-2.500-5.700h5z" fill="#000" stroke="#fff" stroke-width="1.200" stroke-linejoin="round"/></svg>
</div>
<div class="abs" style="left:0;top:1070px;width:10px;height:10px;background:radial-gradient(circle at 100% 0,transparent 9.500px,#000 10.500px)"></div>
<div class="abs" style="left:1910px;top:1070px;width:10px;height:10px;background:radial-gradient(circle at 0 0,transparent 9.500px,#000 10.500px)"></div>
</body></html>
